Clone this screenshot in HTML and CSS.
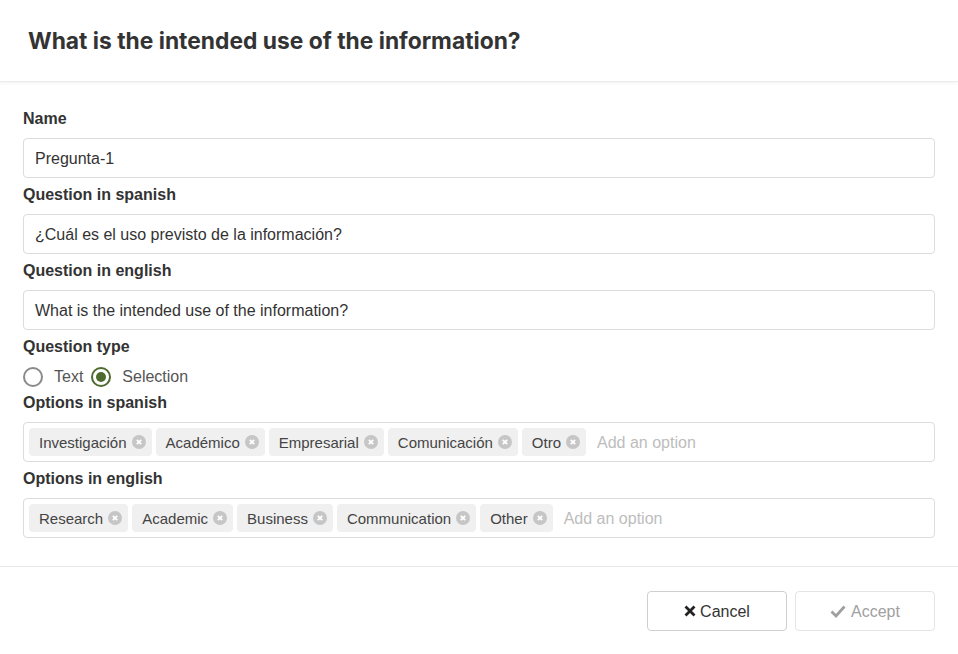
FILE: index.html
```html
<!DOCTYPE html>
<html lang="en">
<head>
<meta charset="utf-8">
<title>Question</title>
<link rel="stylesheet" href="styles.css">
</head>
<body>
<div class="modal">
  <header class="modal-header">
    <h1 class="modal-title">What is the intended use of the information?</h1>
  </header>
  <main class="modal-body">
    <label class="field-label">Name</label>
    <div class="input">Pregunta-1</div>
    <label class="field-label">Question in spanish</label>
    <div class="input">¿Cuál es el uso previsto de la información?</div>
    <label class="field-label">Question in english</label>
    <div class="input">What is the intended use of the information?</div>
    <label class="field-label">Question type</label>
    <div class="radio-row">
      <span class="radio"></span><span class="radio-text">Text</span>
      <span class="radio checked"></span><span class="radio-text">Selection</span>
    </div>
    <label class="field-label">Options in spanish</label>
    <div class="tags-input">
      <span class="tag">Investigación<span class="tag-x"><svg viewBox="0 0 14 14"><path d="M4.8 4.8l4.4 4.4M9.2 4.8l-4.4 4.4"/></svg></span></span>
      <span class="tag">Académico<span class="tag-x"><svg viewBox="0 0 14 14"><path d="M4.8 4.8l4.4 4.4M9.2 4.8l-4.4 4.4"/></svg></span></span>
      <span class="tag">Empresarial<span class="tag-x"><svg viewBox="0 0 14 14"><path d="M4.8 4.8l4.4 4.4M9.2 4.8l-4.4 4.4"/></svg></span></span>
      <span class="tag">Comunicación<span class="tag-x"><svg viewBox="0 0 14 14"><path d="M4.8 4.8l4.4 4.4M9.2 4.8l-4.4 4.4"/></svg></span></span>
      <span class="tag">Otro<span class="tag-x"><svg viewBox="0 0 14 14"><path d="M4.8 4.8l4.4 4.4M9.2 4.8l-4.4 4.4"/></svg></span></span>
      <span class="placeholder">Add an option</span>
    </div>
    <label class="field-label">Options in english</label>
    <div class="tags-input">
      <span class="tag">Research<span class="tag-x"><svg viewBox="0 0 14 14"><path d="M4.8 4.8l4.4 4.4M9.2 4.8l-4.4 4.4"/></svg></span></span>
      <span class="tag">Academic<span class="tag-x"><svg viewBox="0 0 14 14"><path d="M4.8 4.8l4.4 4.4M9.2 4.8l-4.4 4.4"/></svg></span></span>
      <span class="tag">Business<span class="tag-x"><svg viewBox="0 0 14 14"><path d="M4.8 4.8l4.4 4.4M9.2 4.8l-4.4 4.4"/></svg></span></span>
      <span class="tag">Communication<span class="tag-x"><svg viewBox="0 0 14 14"><path d="M4.8 4.8l4.4 4.4M9.2 4.8l-4.4 4.4"/></svg></span></span>
      <span class="tag">Other<span class="tag-x"><svg viewBox="0 0 14 14"><path d="M4.8 4.8l4.4 4.4M9.2 4.8l-4.4 4.4"/></svg></span></span>
      <span class="placeholder">Add an option</span>
    </div>
  </main>
  <footer class="modal-footer">
    <button class="btn"><svg class="btn-icon" viewBox="0 0 12 12"><path d="M1.5 1.5l9 9M10.5 1.5l-9 9" stroke="#222" stroke-width="2.8" stroke-linecap="butt"/></svg>Cancel</button>
    <button class="btn disabled"><svg class="btn-icon check" viewBox="0 0 16 14"><path d="M1.5 7.5l4.5 4.5 8.5-9.5" fill="none" stroke="#a0a0a0" stroke-width="2.8"/></svg>Accept</button>
  </footer>
</div>
</body>
</html>
```

FILE: styles.css
```css
* { box-sizing: border-box; }
html, body { margin: 0; padding: 0; background: #fff; }
body {
  font-family: "Liberation Sans", Arial, sans-serif;
  color: #333;
  width: 958px;
  height: 654px;
  overflow: hidden;
}
.modal { display: flex; flex-direction: column; height: 654px; }
.modal-header {
  height: 82px;
  display: flex;
  align-items: center;
  padding: 0 28px;
  border-bottom: 1px solid #ececec;
  box-shadow: 0 1px 3px rgba(0,0,0,0.06);
}
.modal-title {
  margin: 0;
  padding-top: 1px;
  font-family: Inter, "Liberation Sans", sans-serif;
  font-size: 22.8px;
  font-weight: 700;
  color: #333;
  line-height: 1;
}
.modal-body {
  padding: 20px 23px 28px 23px;
  display: flex;
  flex-direction: column;
  border-bottom: 1px solid #e8e8e8;
}
.field-label {
  display: block;
  font-size: 16px;
  font-weight: 700;
  line-height: 20px;
  margin: 7px 0 9px;
  color: #333;
}
.input {
  height: 40px;
  border: 1px solid #dcdcdc;
  border-radius: 4px;
  padding: 1px 11px 0;
  display: flex;
  align-items: center;
  font-size: 16px;
  color: #333;
}
.radio-row {
  display: flex;
  align-items: center;
  height: 20px;
  margin-top: 1px;
  margin-bottom: -1px;
  font-size: 16px;
  color: #555;
}
.radio {
  width: 20px;
  height: 20px;
  border-radius: 50%;
  border: 2px solid #8a8a8a;
  margin-right: 11px;
  position: relative;
  flex: none;
}
.radio.checked { border-color: #4e6b2e; margin-left: 8px; }
.radio.checked::after {
  content: "";
  position: absolute;
  left: 3px; top: 3px;
  width: 10px; height: 10px;
  border-radius: 50%;
  background: #4e6b2e;
}
.tags-input {
  height: 40px;
  border: 1px solid #dcdcdc;
  border-radius: 4px;
  padding: 0 5px;
  display: flex;
  align-items: center;
  gap: 4px;
}
.tag {
  display: inline-flex;
  align-items: center;
  height: 28px;
  padding: 1px 6px 0 10px;
  background: #f0f0f0;
  border-radius: 4px;
  font-size: 15px;
  color: #444;
}
.tag-x {
  width: 14px;
  height: 14px;
  border-radius: 50%;
  background: #c6c6c6;
  margin-left: 5px;
  margin-top: -1px;
  display: inline-flex;
}
.tag-x svg { width: 14px; height: 14px; }
.tag-x path { stroke: #fff; stroke-width: 1.9; fill: none; }
.placeholder {
  margin-left: 7px;
  padding-top: 1px;
  font-size: 16px;
  color: #bdbdbd;
}
.modal-footer {
  flex: 1;
  display: flex;
  justify-content: flex-end;
  align-items: flex-start;
  gap: 8px;
  padding: 24px 23px 0;
}
.btn {
  width: 140px;
  height: 40px;
  border: 1px solid #cfcfcf;
  border-radius: 4px;
  background: #fff;
  font-family: inherit;
  font-size: 16px;
  color: #333;
  display: inline-flex;
  align-items: center;
  justify-content: center;
  padding: 1px 0 0;
}
.btn.disabled { color: #a0a0a0; border-color: #e4e4e4; }
.btn-icon { width: 12px; height: 12px; margin-right: 4px; margin-top: -1px; }
.btn-icon.check { width: 16px; height: 14px; margin-right: 5px; }
```
